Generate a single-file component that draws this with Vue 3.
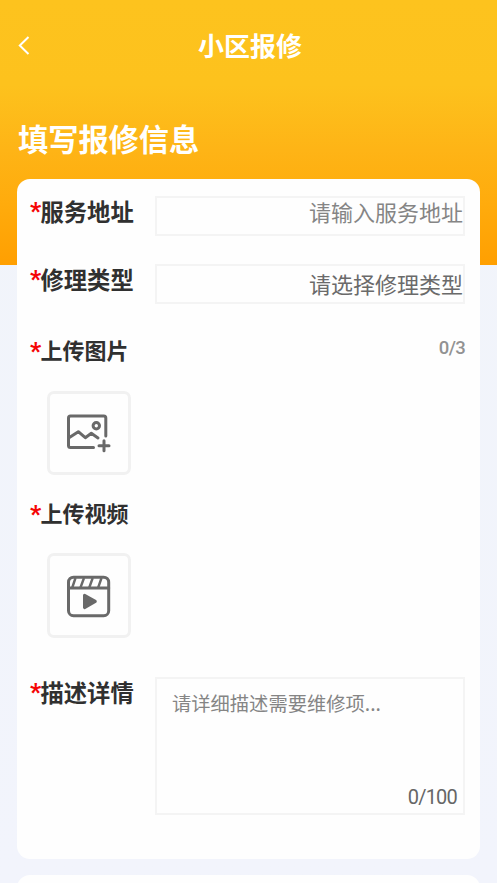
<script setup>
import { ref } from 'vue'

const address = ref('')
const detail = ref('')
const maxPhotos = 3
const maxLength = 100
const photos = ref([])
</script>

<template>
  <main class="page">
    <header class="hero">
      <nav class="navbar">
        <svg class="back" viewBox="0 0 14 20" aria-hidden="true">
          <path d="M12.5 1 L3.8 9.5 L12.5 18" />
        </svg>
        <h1 class="title">小区报修</h1>
      </nav>
      <h2 class="heading">填写报修信息</h2>
    </header>

    <section class="card">
      <div class="row">
        <label class="label"><i class="star">*</i>服务地址</label>
        <div class="field address">
          <input v-model="address" class="input" placeholder="请输入服务地址" />
        </div>
      </div>

      <div class="row">
        <label class="label"><i class="star">*</i>修理类型</label>
        <div class="field picker">请选择修理类型</div>
      </div>

      <div class="upload photo">
        <div class="upload-head">
          <span class="label small"><i class="star">*</i>上传图片</span>
          <span class="count">{{ photos.length }}/{{ maxPhotos }}</span>
        </div>
        <button class="tile" type="button">
          <svg class="icon" viewBox="0 0 84 84">
            <path d="M58.8 45 V27 Q58.8 25 56.8 25 H23.5 Q21.5 25 21.5 27 V54.4 Q21.5 56.4 23.5 56.4 H46.5" />
            <path d="M22 46.7 L31.3 40.7 L38.3 46.7 L44.3 42.3 L51 47" />
            <circle cx="49.3" cy="34.7" r="3.2" />
            <path d="M57 49.8 V59.8 M52 54.8 H62" />
          </svg>
        </button>
      </div>

      <div class="upload video">
        <div class="upload-head">
          <span class="label small"><i class="star">*</i>上传视频</span>
        </div>
        <button class="tile" type="button">
          <svg class="icon" viewBox="0 0 84 84">
            <rect x="21.5" y="23.2" width="40.2" height="38.5" rx="5" />
            <path d="M21.5 34 H61.7" />
            <path class="slash" d="M28.5 24 L25.3 33.5 M37 24 L33.5 33.5 M45.7 24 L42.3 33.5 M54.5 24 L51.2 33.5" />
            <path class="play" d="M37.5 41.2 L48.3 47.4 L37.5 53.6 Z" />
          </svg>
        </button>
      </div>

      <div class="row detail">
        <label class="label"><i class="star">*</i>描述详情</label>
        <div class="field area">
          <textarea v-model="detail" class="textarea" placeholder="请详细描述需要维修项..."></textarea>
          <span class="length">{{ detail.length }}/{{ maxLength }}</span>
        </div>
      </div>
    </section>

    <section class="card next"></section>
  </main>
</template>

<style>
body {
  margin: 0;
  background: #f1f4fc;
}
</style>

<style scoped>
* {
  box-sizing: border-box;
}

.page {
  height: 883px;
  overflow: hidden;
  background: linear-gradient(#f1f4fa, #f2f4fc);
  font-family: Roboto, "Noto Sans CJK SC", sans-serif;
  color: #303030;
}

.hero {
  height: 265px;
  background: linear-gradient(#fdc31e 0, #fdc21d 85px, #feb416 150px, #ffab0c 205px, #ff9f01 265px);
  color: #fff;
}

.navbar {
  display: grid;
  grid-template-columns: 60px 1fr 60px;
  align-items: center;
  height: 92px;
}

.back {
  width: 14px;
  height: 20px;
  margin-left: 16px;
  fill: none;
  stroke: #fff;
  stroke-width: 2;
}

.title {
  margin: 0;
  padding: 2px 0 0 3px;
  text-align: center;
  font-size: 26px;
  font-weight: 700;
  line-height: 36px;
}

.heading {
  margin: 29px 0 0 18px;
  font-size: 30.2px;
  font-weight: 700;
  line-height: 40px;
}

.card {
  height: 680px;
  margin: -86px 17px 0;
  padding: 17px 15px 0 13px;
  border-radius: 13px;
  background: #fefefe;
}

.card.next {
  height: 100px;
  margin-top: 16px;
}

.row {
  display: flex;
  justify-content: space-between;
  height: 40px;
  margin-bottom: 28px;
}

.label {
  display: flex;
  height: 32px;
  font-size: 23.3px;
  font-weight: 700;
  line-height: 35px;
  white-space: nowrap;
}

.small {
  font-size: 22px;
  line-height: 32px;
}

.star {
  width: 10.5px;
  font-size: 24px;
  font-weight: 900;
  font-style: normal;
  line-height: 31px;
  color: #f50505;
}

.field {
  width: 310.5px;
  border: 2px solid #f4f4f4;
}

.address {
  display: flex;
}

.input {
  width: 100%;
  height: 32px;
  padding: 0;
  border: 0;
  outline: 0;
  background: transparent;
  font: 22px/32px Roboto, "Noto Sans CJK SC", sans-serif;
  text-align: right;
}

.input::placeholder,
.textarea::placeholder {
  color: #858585;
  opacity: 1;
}

.picker {
  padding-top: 4px;
  font-size: 22px;
  line-height: 32px;
  text-align: right;
  color: #6a6a6a;
}

.upload-head {
  display: flex;
  justify-content: space-between;
  height: 32px;
}

.photo {
  height: 163px;
  margin-top: 32px;
}

.video {
  height: 178px;
}

.count {
  font-size: 18.5px;
  font-weight: 500;
  line-height: 24px;
  letter-spacing: -0.7px;
  color: #929292;
}

.tile {
  display: block;
  width: 84px;
  height: 84px;
  margin: 23px 0 0 17px;
  padding: 0;
  border: 3px solid #f1f1f1;
  border-radius: 7px;
  background: #fefefe;
}

.video .tile {
  height: 85px;
  margin-top: 22px;
}

.icon {
  display: block;
  width: 84px;
  height: 84px;
  margin: -3px;
  fill: none;
  stroke: #696969;
  stroke-width: 3;
  stroke-linecap: round;
  stroke-linejoin: round;
}

.slash {
  stroke-width: 2.4;
  stroke-linecap: butt;
}

.play {
  fill: #696969;
}

.area {
  display: flex;
  flex-direction: column;
  height: 138px;
  padding: 10px 6px 1px 15.5px;
}

.textarea {
  flex: 1;
  padding: 0;
  border: 0;
  outline: 0;
  resize: none;
  background: transparent;
  font: 19.3px/28px "Noto Sans CJK SC", sans-serif;
}

.length {
  align-self: flex-end;
  font-size: 20px;
  line-height: 30px;
  letter-spacing: -0.8px;
  color: #666;
}
</style>
